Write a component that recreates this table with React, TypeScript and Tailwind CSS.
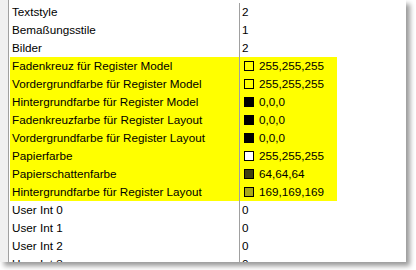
type Row = {
  label: string;
  value: string;
  swatch?: string;
  hi?: boolean;
};

const rows: Row[] = [
  { label: 'Textstyle', value: '2' },
  { label: 'Bemaßungsstile', value: '1' },
  { label: 'Bilder', value: '2' },
  { label: 'Fadenkreuz für Register Model', value: '255,255,255', swatch: 'transparent', hi: true },
  { label: 'Vordergrundfarbe für Register Model', value: '255,255,255', swatch: 'transparent', hi: true },
  { label: 'Hintergrundfarbe für Register Model', value: '0,0,0', swatch: '#000000', hi: true },
  { label: 'Fadenkreuzfarbe für Register Layout', value: '0,0,0', swatch: '#000000', hi: true },
  { label: 'Vordergrundfarbe für Register Layout', value: '0,0,0', swatch: '#000000', hi: true },
  { label: 'Papierfarbe', value: '255,255,255', swatch: '#ffffff', hi: true },
  { label: 'Papierschattenfarbe', value: '64,64,64', swatch: '#404010', hi: true },
  { label: 'Hintergrundfarbe für Register Layout', value: '169,169,169', swatch: '#a9a918', hi: true },
  { label: 'User Int 0', value: '0' },
  { label: 'User Int 1', value: '0' },
  { label: 'User Int 2', value: '0' },
  { label: 'User Int 3', value: '0' },
];

export default function App() {
  return (
    <main className="h-[270px] w-[416px] bg-white">
      <div className="flex h-[262px] w-[406px] overflow-hidden bg-white shadow-[4px_4px_5px_rgba(0,0,0,0.4)]">
        <div className="w-[9px] shrink-0 border-r border-[#a0a0a0] bg-[#f0f0f0]" />
        <div className="flex-1 pl-[1px] pt-[3px] font-['Liberation_Sans',Arial,sans-serif] text-[11.7px] text-black">
          {rows.map((r) => (
            <div key={r.label} className="flex h-[18px] items-center">
              <div
                className={`flex h-full w-[229px] shrink-0 items-center pl-[2px] ${
                  r.hi ? 'bg-[#ffff00]' : ''
                }`}
              >
                {r.label}
              </div>
              <div
                className={`flex h-full w-[98px] shrink-0 items-center border-l border-[#a0a0a0] pl-[2px] ${
                  r.hi ? 'bg-[#ffff00]' : ''
                }`}
              >
                {r.swatch && (
                  <span
                    className="mr-[5px] ml-[2px] h-[10px] w-[10px] border border-black"
                    style={{ backgroundColor: r.swatch }}
                  />
                )}
                {r.value}
              </div>
            </div>
          ))}
        </div>
      </div>
    </main>
  );
}
